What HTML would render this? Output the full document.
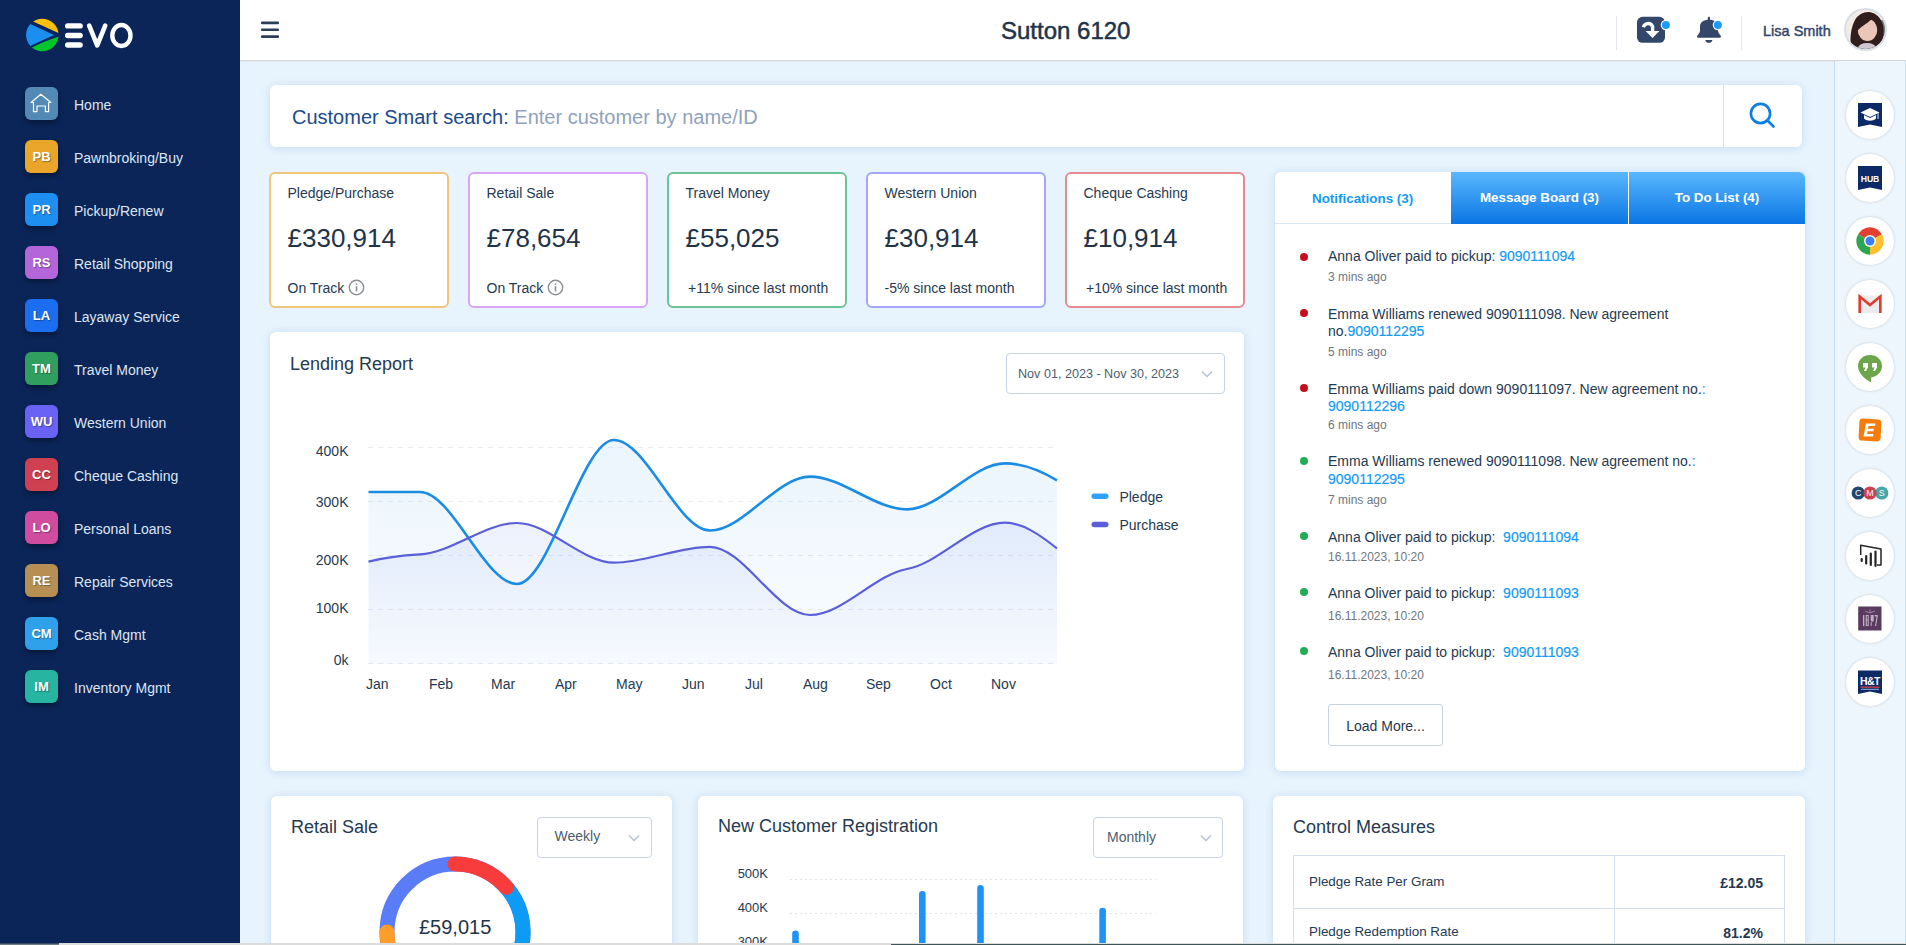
<!DOCTYPE html>
<html><head><meta charset="utf-8">
<style>
*{box-sizing:border-box;margin:0;padding:0}
html,body{width:1906px;height:945px;overflow:hidden}
body{font-family:"Liberation Sans",sans-serif;background:#e8f4fd;position:relative;color:#1f3349}
.abs{position:absolute}
#side{left:0;top:0;width:240px;height:945px;background:#0b2558}
#hdr{left:240px;top:0;width:1666px;height:61px;background:#fff;border-bottom:1px solid #d4d8dc;box-shadow:0 1px 1px rgba(0,0,0,.04)}
#rail{left:1834px;top:61px;width:72px;height:884px;background:#eef6fd;border-left:1px solid #c4dcf0;border-right:1px solid #c5def5}
.nav{position:absolute;left:25px;width:210px;height:33px}
.nav .ic{position:absolute;left:0;top:0;width:33px;height:33px;border-radius:6px;color:#fff;font-weight:bold;font-size:13px;line-height:33px;text-align:center;box-shadow:0 3px 5px rgba(0,0,0,.35);text-shadow:1px 1px 1px rgba(0,0,0,.35)}
.nav .lb{position:absolute;left:49px;top:10px;font-size:14px;color:#dde5f4;white-space:nowrap;line-height:16px}
.card{position:absolute;background:#fff;border-radius:6px;box-shadow:0 1px 8px rgba(120,170,220,.35)}
.kpi{position:absolute;top:172px;width:180px;height:136px;background:#fff;border-radius:6px;border:2px solid}
.kpi .t{position:absolute;left:16.5px;top:12.3px;line-height:14px;font-size:14px;color:#253a52;white-space:nowrap}
.kpi .v{position:absolute;left:16.5px;top:51px;line-height:26px;font-size:26px;color:#1f3349;white-space:nowrap}
.kpi .s{position:absolute;left:16.5px;top:106.5px;line-height:14px;font-size:14px;color:#253a52;white-space:nowrap}
.rb{position:absolute;width:48px;height:48px;border-radius:50%;background:#fff;left:1846px;box-shadow:0 0 3px rgba(0,0,0,.18)}
.ntx{position:absolute;left:53px;font-size:14px;line-height:14px;color:#253a52;white-space:nowrap}
.ntx a{color:#129bf5;-webkit-text-stroke:0.2px #129bf5}
.ntm{position:absolute;left:53px;font-size:12px;line-height:12px;color:#6e7780;white-space:nowrap}
</style></head>
<body>
<div id="side" class="abs"><svg class="abs" style="left:0;top:0" width="240" height="70" viewBox="0 0 240 70">
<defs><clipPath id="lc"><circle cx="42.3" cy="35" r="16.2"/></clipPath></defs>
<g clip-path="url(#lc)">
<polygon points="10,7.5 70,7.5 70,38.2 10,11" fill="#fcbf0c"/>
<polygon points="10,53.4 70,32.8 70,70 10,70" fill="#00c62c"/>
<polygon points="10,13.6 56,35 10,56.6" fill="#1b8ef0" stroke="#0b2558" stroke-width="1.9" stroke-linejoin="miter"/>
</g>
<rect x="65" y="23.2" width="17.8" height="5.4" rx="2.7" fill="#fff"/>
<rect x="65" y="32.8" width="17.8" height="5.4" rx="2.7" fill="#fff"/>
<rect x="65" y="42.3" width="17.8" height="5.4" rx="2.7" fill="#fff"/>
<polyline points="89.2,25.6 97.2,45.3 105.2,25.6" fill="none" stroke="#fff" stroke-width="4.6" stroke-linecap="round" stroke-linejoin="round"/>
<ellipse cx="121.4" cy="35.5" rx="9.1" ry="10.5" fill="none" stroke="#fff" stroke-width="4.4"/>
</svg>
<div class="nav" style="top:87px"><div class="ic" style="background:#5289b5"><svg width="33" height="33" viewBox="0 0 33 33" style="display:block"><path d="M6.1 15.5 L15.8 7.3 L25.9 15.5 L23.6 15.5 L23.6 24.7 L20.4 24.7 L20.4 19 L12 19 L12 24.7 L8.5 24.7 L8.5 15.5 Z" fill="none" stroke="#fff" stroke-width="1.2" stroke-linejoin="round"/></svg></div><div class="lb">Home</div></div>
<div class="nav" style="top:140px"><div class="ic" style="background:#eaa62b">PB</div><div class="lb">Pawnbroking/Buy</div></div>
<div class="nav" style="top:193px"><div class="ic" style="background:#1d8ff0">PR</div><div class="lb">Pickup/Renew</div></div>
<div class="nav" style="top:246px"><div class="ic" style="background:#b465d9">RS</div><div class="lb">Retail Shopping</div></div>
<div class="nav" style="top:299px"><div class="ic" style="background:#1b6ef0">LA</div><div class="lb">Layaway Service</div></div>
<div class="nav" style="top:352px"><div class="ic" style="background:#2f9e5f">TM</div><div class="lb">Travel Money</div></div>
<div class="nav" style="top:405px"><div class="ic" style="background:#6a62f5">WU</div><div class="lb">Western Union</div></div>
<div class="nav" style="top:458px"><div class="ic" style="background:#cf4150">CC</div><div class="lb">Cheque Cashing</div></div>
<div class="nav" style="top:511px"><div class="ic" style="background:#cf4c9f">LO</div><div class="lb">Personal Loans</div></div>
<div class="nav" style="top:564px"><div class="ic" style="background:#b78f52">RE</div><div class="lb">Repair Services</div></div>
<div class="nav" style="top:617px"><div class="ic" style="background:#2fa1ea">CM</div><div class="lb">Cash Mgmt</div></div>
<div class="nav" style="top:670px"><div class="ic" style="background:#27b4a0">IM</div><div class="lb">Inventory Mgmt</div></div></div>
<div id="hdr" class="abs">
<svg class="abs" style="left:21px;top:21px" width="20" height="18" viewBox="0 0 20 18"><rect x="0" y="0.6" width="18" height="2.6" rx="1" fill="#2c3e5a"/><rect x="0" y="7.4" width="18" height="2.6" rx="1" fill="#2c3e5a"/><rect x="0" y="14.3" width="18" height="2.6" rx="1" fill="#2c3e5a"/></svg>
<div class="abs" style="left:761px;top:19.3px;font-size:24px;line-height:24px;color:#1f3349;-webkit-text-stroke:0.5px #1f3349;white-space:nowrap">Sutton 6120</div>
<div class="abs" style="left:1376px;top:16px;width:1px;height:34px;background:#e4e8ec"></div>
<svg class="abs" style="left:1390px;top:10px" width="100" height="40" viewBox="1630 10 100 40">
<rect x="1637" y="16.8" width="28" height="26" rx="5.5" fill="#34476a"/>
<path d="M1643.3 27.2 C1644.5 23.2 1650.5 21.8 1652.6 26.5 L1652.6 31.5" fill="none" stroke="#fff" stroke-width="3.4" stroke-linecap="butt"/>
<polygon points="1645.6,31 1659.4,31 1652.5,38" fill="#fff"/>
<path d="M1697 36.5 C1697 35.2 1699.8 33.5 1700 31 L1700 26.5 C1700 22.5 1703.5 19.8 1709 19.8 C1714.5 19.8 1718 22.5 1718 26.5 L1718 31 C1718.2 33.5 1721 35.2 1721 36.5 C1721 37.5 1720.5 37.8 1719.5 37.8 L1698.5 37.8 C1697.5 37.8 1697 37.5 1697 36.5 Z" fill="#34476a"/>
<rect x="1707.8" y="16.8" width="2.2" height="4" rx="1.1" fill="#34476a"/>
<path d="M1705.3 39.9 H1712.4 C1712 42 1710.5 42.8 1708.85 42.8 C1707.2 42.8 1705.7 42 1705.3 39.9 Z" fill="#34476a"/>
<circle cx="1665.9" cy="25" r="5.2" fill="#fff"/><circle cx="1665.9" cy="25" r="4" fill="#1a9cf7"/>
<circle cx="1717.9" cy="25" r="5.2" fill="#fff"/><circle cx="1717.9" cy="25" r="4" fill="#1a9cf7"/>
</svg>
<div class="abs" style="left:1501px;top:16px;width:1px;height:34px;background:#e4e8ec"></div>
<div class="abs" style="left:1523px;top:24px;font-size:14.5px;line-height:14px;color:#34476a;-webkit-text-stroke:0.45px #34476a;white-space:nowrap">Lisa Smith</div>
<div class="abs" style="left:1604px;top:8px;width:43px;height:43px;border-radius:50%;border:2px solid #d7e0e9;overflow:hidden;background:#f4ebe2">
<svg width="39" height="39" viewBox="0 0 39 39" style="display:block">
<rect x="31" y="10" width="8" height="16" fill="#77777d"/>
<path d="M5.5 39 C3.5 30 4.5 18 9 10 C13 3 21 0.5 27 3 C32 5 35 9 37 15 C38.5 21 37.5 30 35 39 Z" fill="#2f1e1b"/>
<ellipse cx="21.5" cy="20" rx="9.8" ry="11" fill="#eac6b6"/>
<path d="M10.5 19 C11 11 17 7 26 8.5 C23 12.5 17 15 11 21 Z" fill="#2f1e1b"/>
<path d="M30.5 16 C33 20 32 30 29 36 L35 38 C37 30 36 20 33 14 Z" fill="#2f1e1b"/>
<ellipse cx="21" cy="38" rx="9" ry="5" fill="#cfc6d2"/>
</svg></div>
</div>

<div class="card" style="left:270px;top:85px;width:1532px;height:62px">
<div class="abs" style="left:22px;top:106px;"></div>
<div class="abs" style="left:22px;top:22px;font-size:20px;line-height:20px;white-space:nowrap;color:#1b4a8c">Customer Smart search: <span style="color:#8fa3bd">Enter customer by name/ID</span></div>
<div class="abs" style="left:1453px;top:0;width:1px;height:62px;background:#dde3ea"></div>
<svg class="abs" style="left:1476px;top:13.8px" width="34" height="34" viewBox="0 0 34 34"><circle cx="14.5" cy="14.5" r="9.6" fill="none" stroke="#0a7fe0" stroke-width="2.6"/><line x1="21.5" y1="21.5" x2="27.5" y2="27.5" stroke="#0a7fe0" stroke-width="2.6" stroke-linecap="round"/></svg>
</div>
<div class="kpi" style="left:269px;border-color:#f1c67a"><div class="t">Pledge/Purchase</div><div class="v">£330,914</div><div class="s">On Track <svg style="position:absolute;left:60.5px;top:-1.3px" width="17" height="17" viewBox="0 0 17 17"><circle cx="8.5" cy="8.5" r="7.2" fill="none" stroke="#8a8f96" stroke-width="1.4"/><rect x="7.7" y="7.2" width="1.6" height="5.2" fill="#8a8f96"/><rect x="7.7" y="4.4" width="1.6" height="1.6" fill="#8a8f96"/></svg></div></div>
<div class="kpi" style="left:468px;border-color:#d8a6f2"><div class="t">Retail Sale</div><div class="v">£78,654</div><div class="s">On Track <svg style="position:absolute;left:60.5px;top:-1.3px" width="17" height="17" viewBox="0 0 17 17"><circle cx="8.5" cy="8.5" r="7.2" fill="none" stroke="#8a8f96" stroke-width="1.4"/><rect x="7.7" y="7.2" width="1.6" height="5.2" fill="#8a8f96"/><rect x="7.7" y="4.4" width="1.6" height="1.6" fill="#8a8f96"/></svg></div></div>
<div class="kpi" style="left:667px;border-color:#6dc39a"><div class="t">Travel Money</div><div class="v">£55,025</div><div class="s" style="left:19px">+11% since last month</div></div>
<div class="kpi" style="left:866px;border-color:#a3a6fb"><div class="t">Western Union</div><div class="v">£30,914</div><div class="s">-5% since last month</div></div>
<div class="kpi" style="left:1065px;border-color:#e38a92"><div class="t">Cheque Cashing</div><div class="v">£10,914</div><div class="s" style="left:19px">+10% since last month</div></div>

<div class="card" style="left:1275px;top:172px;width:530px;height:599px">
<div class="abs" style="left:0;top:0;width:176px;height:52px;border-bottom:1.5px solid #d6e6f6"></div>
<div class="abs" style="left:37px;top:20px;font-size:13.4px;line-height:14px;font-weight:bold;color:#129bf5;white-space:nowrap">Notifications (3)</div>
<div class="abs" style="left:176px;top:0;width:177px;height:52px;background:linear-gradient(#5ab7fd,#0a76e4)"></div>
<div class="abs" style="left:354px;top:0;width:176px;height:52px;background:linear-gradient(#5ab7fd,#0a76e4);border-top-right-radius:6px"></div>
<div class="abs" style="left:176px;top:19px;width:177px;text-align:center;font-size:13.4px;line-height:14px;font-weight:bold;color:#fff;white-space:nowrap">Message Board (3)</div>
<div class="abs" style="left:354px;top:19px;width:176px;text-align:center;font-size:13.4px;line-height:14px;font-weight:bold;color:#fff;white-space:nowrap">To Do List (4)</div>
<div class="abs" style="left:25px;top:80.8px;width:8px;height:8px;border-radius:50%;background:#c5101b"></div>
<div class="ntx" style="top:77.1px">Anna Oliver paid to pickup: <a>9090111094</a></div>
<div class="ntm" style="top:98.8px">3 mins ago</div>
<div class="abs" style="left:25px;top:137.2px;width:8px;height:8px;border-radius:50%;background:#c5101b"></div>
<div class="ntx" style="top:134.6px">Emma Williams renewed 9090111098. New agreement</div>
<div class="ntx" style="top:152.4px">no.<a>9090112295</a></div>
<div class="ntm" style="top:173.8px">5 mins ago</div>
<div class="abs" style="left:25px;top:212.0px;width:8px;height:8px;border-radius:50%;background:#c5101b"></div>
<div class="ntx" style="top:209.6px">Emma Williams paid down 9090111097. New agreement no.<a>:</a></div>
<div class="ntx" style="top:227.4px"><a>9090112296</a></div>
<div class="ntm" style="top:246.8px">6 mins ago</div>
<div class="abs" style="left:25px;top:284.5px;width:8px;height:8px;border-radius:50%;background:#1fad55"></div>
<div class="ntx" style="top:282.0px">Emma Williams renewed 9090111098. New agreement no.<a>:</a></div>
<div class="ntx" style="top:300.0px"><a>9090112295</a></div>
<div class="ntm" style="top:321.8px">7 mins ago</div>
<div class="abs" style="left:25px;top:360.0px;width:8px;height:8px;border-radius:50%;background:#1fad55"></div>
<div class="ntx" style="top:357.6px">Anna Oliver paid to pickup:&nbsp; <a>9090111094</a></div>
<div class="ntm" style="top:379.4px">16.11.2023, 10:20</div>
<div class="abs" style="left:25px;top:416.2px;width:8px;height:8px;border-radius:50%;background:#1fad55"></div>
<div class="ntx" style="top:414.4px">Anna Oliver paid to pickup:&nbsp; <a>9090111093</a></div>
<div class="ntm" style="top:437.8px">16.11.2023, 10:20</div>
<div class="abs" style="left:25px;top:475.0px;width:8px;height:8px;border-radius:50%;background:#1fad55"></div>
<div class="ntx" style="top:473.4px">Anna Oliver paid to pickup:&nbsp; <a>9090111093</a></div>
<div class="ntm" style="top:497.1px">16.11.2023, 10:20</div>
<div class="abs" style="left:53px;top:532px;width:115px;height:42px;border:1px solid #c9d3de;border-radius:3px"></div>
<div class="abs" style="left:53px;top:546.9px;width:115px;text-align:center;font-size:14px;line-height:14px;color:#253a52;white-space:nowrap">Load More...</div>
</div>

<div class="card" style="left:270px;top:332px;width:974px;height:439px"></div>
<div class="abs" style="left:290px;top:355.3px;font-size:18px;line-height:18px;color:#253a52;white-space:nowrap">Lending Report</div>
<div class="abs" style="left:1005.5px;top:352.5px;width:219px;height:41px;border:1px solid #c8d4e3;border-radius:4px"></div>
<div class="abs" style="left:1018px;top:368px;font-size:12.6px;line-height:13px;color:#4d5d70;white-space:nowrap">Nov 01, 2023 - Nov 30, 2023</div>
<svg class="abs" style="left:0;top:0" width="1906" height="945" viewBox="0 0 1906 945">
<defs>
<linearGradient id="gp" x1="0" y1="0" x2="0" y2="1"><stop offset="0" stop-color="#4aa3ee" stop-opacity="0.11"/><stop offset="1" stop-color="#4aa3ee" stop-opacity="0.03"/></linearGradient>
<linearGradient id="gq" x1="0" y1="0" x2="0" y2="1"><stop offset="0" stop-color="#6b8ae6" stop-opacity="0.12"/><stop offset="1" stop-color="#6b8ae6" stop-opacity="0.02"/></linearGradient>
</defs>
<polyline points="1202,371.5 1207,376.5 1212,371.5" fill="none" stroke="#b3c0d0" stroke-width="1.3"/>
<g stroke="#e8ecf1" stroke-width="1" stroke-dasharray="5 5">
<line x1="368" y1="447.5" x2="1058" y2="447.5"/><line x1="368" y1="501.5" x2="1058" y2="501.5"/><line x1="368" y1="555.5" x2="1058" y2="555.5"/><line x1="368" y1="609.5" x2="1058" y2="609.5"/><line x1="368" y1="663.5" x2="1058" y2="663.5"/>
</g>
<path d="M368.5 492.0 C385.7 492.0 402.8 492.0 420.0 492.0 C452.3 492.0 484.7 584.0 517.0 584.0 C549.3 584.0 581.7 440.0 614.0 440.0 C646.0 440.0 678.0 530.5 710.0 530.5 C743.3 530.5 776.7 476.6 810.0 476.6 C842.3 476.6 874.7 509.4 907.0 509.4 C939.7 509.4 972.3 463.4 1005.0 463.4 C1022.3 463.4 1039.7 470.0 1057.0 480.4 L1057 664 L368.5 664 Z" fill="url(#gp)"/>
<path d="M368.5 561.6 C385.7 557.3 402.8 555.4 420.0 554.4 C452.3 552.5 484.7 523.0 517.0 523.0 C549.3 523.0 581.7 562.7 614.0 562.7 C646.0 562.7 678.0 546.8 710.0 546.8 C743.3 546.8 776.7 615.0 810.0 615.0 C842.3 615.0 874.7 574.8 907.0 569.0 C939.7 563.1 972.3 522.7 1005.0 522.7 C1022.3 522.7 1039.7 534.6 1057.0 548.5 L1057 664 L368.5 664 Z" fill="url(#gq)"/>
<path d="M368.5 492.0 C385.7 492.0 402.8 492.0 420.0 492.0 C452.3 492.0 484.7 584.0 517.0 584.0 C549.3 584.0 581.7 440.0 614.0 440.0 C646.0 440.0 678.0 530.5 710.0 530.5 C743.3 530.5 776.7 476.6 810.0 476.6 C842.3 476.6 874.7 509.4 907.0 509.4 C939.7 509.4 972.3 463.4 1005.0 463.4 C1022.3 463.4 1039.7 470.0 1057.0 480.4" fill="none" stroke="#1b8ce3" stroke-width="2.6"/>
<path d="M368.5 561.6 C385.7 557.3 402.8 555.4 420.0 554.4 C452.3 552.5 484.7 523.0 517.0 523.0 C549.3 523.0 581.7 562.7 614.0 562.7 C646.0 562.7 678.0 546.8 710.0 546.8 C743.3 546.8 776.7 615.0 810.0 615.0 C842.3 615.0 874.7 574.8 907.0 569.0 C939.7 563.1 972.3 522.7 1005.0 522.7 C1022.3 522.7 1039.7 534.6 1057.0 548.5" fill="none" stroke="#5a5ed8" stroke-width="2.2"/>
<rect x="1091.5" y="493.5" width="17" height="5.5" rx="2.75" fill="#2ea2f7"/>
<rect x="1091.5" y="521.8" width="17" height="5.5" rx="2.75" fill="#5a5ed8"/>
<g font-family="Liberation Sans" font-size="14" fill="#253a52">
<text x="348.5" y="455.9" text-anchor="end">400K</text>
<text x="348.5" y="507" text-anchor="end">300K</text>
<text x="348.5" y="565" text-anchor="end">200K</text>
<text x="348.5" y="612.8" text-anchor="end">100K</text>
<text x="348.5" y="665" text-anchor="end">0k</text>
<text x="366" y="689">Jan</text><text x="429" y="689">Feb</text><text x="491" y="689">Mar</text><text x="555" y="689">Apr</text><text x="616" y="689">May</text><text x="682" y="689">Jun</text><text x="745" y="689">Jul</text><text x="803" y="689">Aug</text><text x="866" y="689">Sep</text><text x="930" y="689">Oct</text><text x="991" y="689">Nov</text>
<text x="1119.4" y="501.5">Pledge</text>
<text x="1119.4" y="529.5">Purchase</text>
</g>
</svg>

<div class="card" style="left:271px;top:796px;width:401px;height:200px"></div>
<div class="abs" style="left:291px;top:817.9px;font-size:18px;line-height:18px;color:#253a52;white-space:nowrap">Retail Sale</div>
<div class="abs" style="left:536.5px;top:816.5px;width:115px;height:41px;border:1px solid #c8d4e3;border-radius:4px"></div>
<div class="abs" style="left:554.5px;top:829.3px;font-size:14px;line-height:14px;color:#4d5d70;white-space:nowrap">Weekly</div>
<svg class="abs" style="left:628px;top:834px" width="12" height="8" viewBox="0 0 12 8"><polyline points="1,1.5 6,6.5 11,1.5" fill="none" stroke="#b3c0d0" stroke-width="1.3"/></svg>
<svg class="abs" style="left:369.3px;top:845.6px" width="172" height="172" viewBox="-86 -86 172 172">
<circle r="68" fill="none" stroke="#5b7cf7" stroke-width="15"/>
<path d="M43.71 -52.09 A68 68 0 0 1 -5.93 67.74" fill="none" stroke="#0d9bf5" stroke-width="15"/>
<path d="M-34.00 58.89 A68 68 0 0 1 -68.00 0.00" fill="none" stroke="#ff9d2b" stroke-width="15" stroke-linecap="round"/>
<path d="M0.00 -68.00 A68 68 0 0 1 51.32 -44.61" fill="none" stroke="#f83b3b" stroke-width="15" stroke-linecap="round"/>
</svg>
<div class="abs" style="left:419px;top:916.7px;font-size:20px;line-height:20px;color:#1f3349;white-space:nowrap">£59,015</div>

<div class="card" style="left:698px;top:796px;width:545px;height:200px"></div>
<div class="abs" style="left:718px;top:817.4px;font-size:18px;line-height:18px;color:#253a52;white-space:nowrap">New Customer Registration</div>
<div class="abs" style="left:1092.5px;top:816.5px;width:130px;height:41px;border:1px solid #c8d4e3;border-radius:4px"></div>
<div class="abs" style="left:1107px;top:829.8px;font-size:14px;line-height:14px;color:#4d5d70;white-space:nowrap">Monthly</div>
<svg class="abs" style="left:1200px;top:834px" width="12" height="8" viewBox="0 0 12 8"><polyline points="1,1.5 6,6.5 11,1.5" fill="none" stroke="#b3c0d0" stroke-width="1.3"/></svg>
<svg class="abs" style="left:0;top:780px" width="1906" height="165" viewBox="0 780 1906 165">
<g stroke="#dfe4ea" stroke-width="1" stroke-dasharray="2 3"><line x1="790" y1="879.5" x2="1156" y2="879.5"/><line x1="790" y1="913.5" x2="1156" y2="913.5"/></g>
<g font-family="Liberation Sans" font-size="13" fill="#253a52"><text x="768" y="877.5" text-anchor="end">500K</text><text x="768" y="911.6" text-anchor="end">400K</text><text x="768" y="945.6" text-anchor="end">300K</text></g>
<g fill="#1f92f5"><rect x="792.2" y="930.4" width="6.6" height="40" rx="3.3"/><rect x="919" y="891" width="6.6" height="80" rx="3.3"/><rect x="977.2" y="884.9" width="6.6" height="80" rx="3.3"/><rect x="1099.3" y="907.8" width="6.6" height="80" rx="3.3"/></g>
</svg>

<div class="card" style="left:1273px;top:796px;width:532px;height:200px"></div>
<div class="abs" style="left:1293px;top:818.4px;font-size:18px;line-height:18px;color:#253a52;white-space:nowrap">Control Measures</div>
<div class="abs" style="left:1293px;top:855px;width:492px;height:120px;border:1px solid #d6deed"></div>
<div class="abs" style="left:1293px;top:907.5px;width:492px;height:1px;background:#d6deed"></div>
<div class="abs" style="left:1614px;top:855px;width:1px;height:120px;background:#d6deed"></div>
<div class="abs" style="left:1309px;top:874.9px;font-size:13.4px;line-height:14px;color:#253a52;white-space:nowrap">Pledge Rate Per Gram</div>
<div class="abs" style="left:1309px;top:925.1px;font-size:13.4px;line-height:14px;color:#253a52;white-space:nowrap">Pledge Redemption Rate</div>
<div class="abs" style="left:1615px;width:148px;text-align:right;top:875.9px;font-size:14px;line-height:14px;font-weight:bold;color:#253a52;white-space:nowrap">£12.05</div>
<div class="abs" style="left:1615px;width:148px;text-align:right;top:926.4px;font-size:14px;line-height:14px;font-weight:bold;color:#253a52;white-space:nowrap">81.2%</div>
<div class="abs" style="left:0;top:943px;width:1906px;height:2px;background:#dcdcdc;z-index:20"></div>
<div class="abs" style="left:891px;top:943.5px;width:1015px;height:1.5px;background:#3e5457;z-index:21"></div>
<div class="abs" style="left:0;top:943px;width:59px;height:2px;background:linear-gradient(#1d3550,#8a9598);z-index:21"></div>
<div id="rail" class="abs"></div>
<div class="rb" style="top:90.5px"><svg width="48" height="48" viewBox="-24 -24 48 48" style="display:block"><path d="M-12 -12 H12 V12 L0 9.5 L-12 12 Z" fill="#0b2a66"/><path d="M-9.5 -2.5 L0 -7 L9.5 -2.5 L0 2 Z" fill="#fff"/><path d="M-6 0 V3.5 C-3 6.5 3 6.5 6 3.5 V0 L0 3 Z" fill="#fff"/><line x1="8" y1="-2" x2="8" y2="4" stroke="#fff" stroke-width="0.9"/></svg></div>
<div class="rb" style="top:153.6px"><svg width="48" height="48" viewBox="-24 -24 48 48" style="display:block"><path d="M-12 -12 H12 V12 L0 9.5 L-12 12 Z" fill="#0b2a66"/><text x="0" y="3.6" text-anchor="middle" font-family="Liberation Sans" font-weight="bold" font-size="8.6" fill="#fff">HUB</text></svg></div>
<div class="rb" style="top:216.7px"><svg width="48" height="48" viewBox="-24 -24 48 48" style="display:block"><path d="M0 0 L-11.86 -6.85 A13.7 13.7 0 0 1 11.86 -6.85 Z" fill="#e53d30"/><path d="M0 0 L11.86 -6.85 A13.7 13.7 0 0 1 0.00 13.70 Z" fill="#fcc12c"/><path d="M0 0 L0.00 13.70 A13.7 13.7 0 0 1 -11.86 -6.85 Z" fill="#2fa550"/><circle r="6" fill="#fff"/><circle r="4.5" fill="#3f7ef0"/></svg></div>
<div class="rb" style="top:279.8px"><svg width="48" height="48" viewBox="-24 -24 48 48" style="display:block"><rect x="-11.5" y="-8.5" width="23" height="17.5" fill="#ececec"/><path d="M-10.3 9 V-7.5 L0 1 L10.3 -7.5 V9" fill="none" stroke="#e03c30" stroke-width="2.6" stroke-linejoin="miter"/></svg></div>
<div class="rb" style="top:342.9px"><svg width="48" height="48" viewBox="-24 -24 48 48" style="display:block"><path d="M0 -12 C6.8 -12 12 -7.2 12 -1 C12 5.5 6.5 9.5 1 10.5 V15.5 C-5 12 -12 6.5 -12 -1 C-12 -7.2 -6.8 -12 0 -12 Z" fill="#6da64a"/><path d="M-7 -4 H-2 V0.5 L-4 4 H-6 L-4.5 0.5 H-7 Z M2 -4 H7 V0.5 L5 4 H3 L4.5 0.5 H2 Z" fill="#fff"/></svg></div>
<div class="rb" style="top:406.0px"><svg width="48" height="48" viewBox="-24 -24 48 48" style="display:block"><g transform="rotate(3)"><rect x="-11" y="-11" width="22" height="22" rx="3.5" fill="#f57c0a"/></g><path d="M-4 -6.5 H5.5 L5 -4 H-1.5 L-2 -1.2 H3.8 L3.4 1.2 H-2.4 L-3 4 H3.5 L3 6.5 H-6.5 Z" fill="#fff"/></svg></div>
<div class="rb" style="top:469.1px"><svg width="48" height="48" viewBox="-24 -24 48 48" style="display:block"><circle cx="-11.8" cy="0" r="6.6" fill="#23476f"/><circle cx="11.8" cy="0" r="6.6" fill="#44a6a6"/><circle cx="0" cy="0" r="6.6" fill="#d13f4c"/><g font-family="Liberation Sans" font-size="9" fill="#fff" text-anchor="middle"><text x="-11.8" y="3.3">C</text><text x="0" y="3.3">M</text><text x="11.8" y="3.3">S</text></g></svg></div>
<div class="rb" style="top:532.2px"><svg width="48" height="48" viewBox="-24 -24 48 48" style="display:block"><path d="M-9.3 -1 V-10.7 L11 -7 V9 H7" fill="none" stroke="#252525" stroke-width="1.5" stroke-linejoin="round"/><g stroke="#252525" stroke-width="2.2" stroke-linecap="round"><line x1="-8.3" y1="3" x2="-8.3" y2="5"/><line x1="-3.8" y1="0" x2="-3.8" y2="7.5"/><line x1="0.8" y1="-2.5" x2="0.8" y2="9"/><line x1="5.5" y1="-4.5" x2="5.5" y2="10"/></g></svg></div>
<div class="rb" style="top:595.3px"><svg width="48" height="48" viewBox="-24 -24 48 48" style="display:block"><rect x="-11.8" y="-12.5" width="23.3" height="24" fill="#5b3a60"/><g fill="#bfb3c2"><rect x="-7" y="-4" width="1.3" height="11"/><path d="M-4.3 -4 h3 v11 h-3 z M-3.2 -3 v3.5 h0.9 v-3.5 z M-3.2 1.5 v4.5 h0.9 v-4.5 z"/><path d="M0.7 -4 h3 v6 h-2 v5 h-1 v-4 h2 v-1 h-2 z" /><path d="M4.7 -4 h3 v1.5 l-1.6 9.5 h-1.1 l1.6 -9.5 h-1.9 z"/></g><path d="M-5 -8 L0 -6 L5 -8 M0 -10 V-6" stroke="#bfb3c2" stroke-width="0.6" fill="none"/></svg></div>
<div class="rb" style="top:658.4px"><svg width="48" height="48" viewBox="-24 -24 48 48" style="display:block"><path d="M-12 -11.5 H12 V12 L0 9.5 L-12 12 Z" fill="#0b2a66"/><text x="0" y="3" text-anchor="middle" font-family="Liberation Sans" font-weight="bold" font-size="10.5" fill="#fff" letter-spacing="-0.5">H&amp;T</text><rect x="-9.5" y="4.5" width="19" height="1.3" fill="#d8414d"/><rect x="-9" y="6.8" width="18" height="1" fill="#9fb0cc"/></svg></div>
</body></html>
